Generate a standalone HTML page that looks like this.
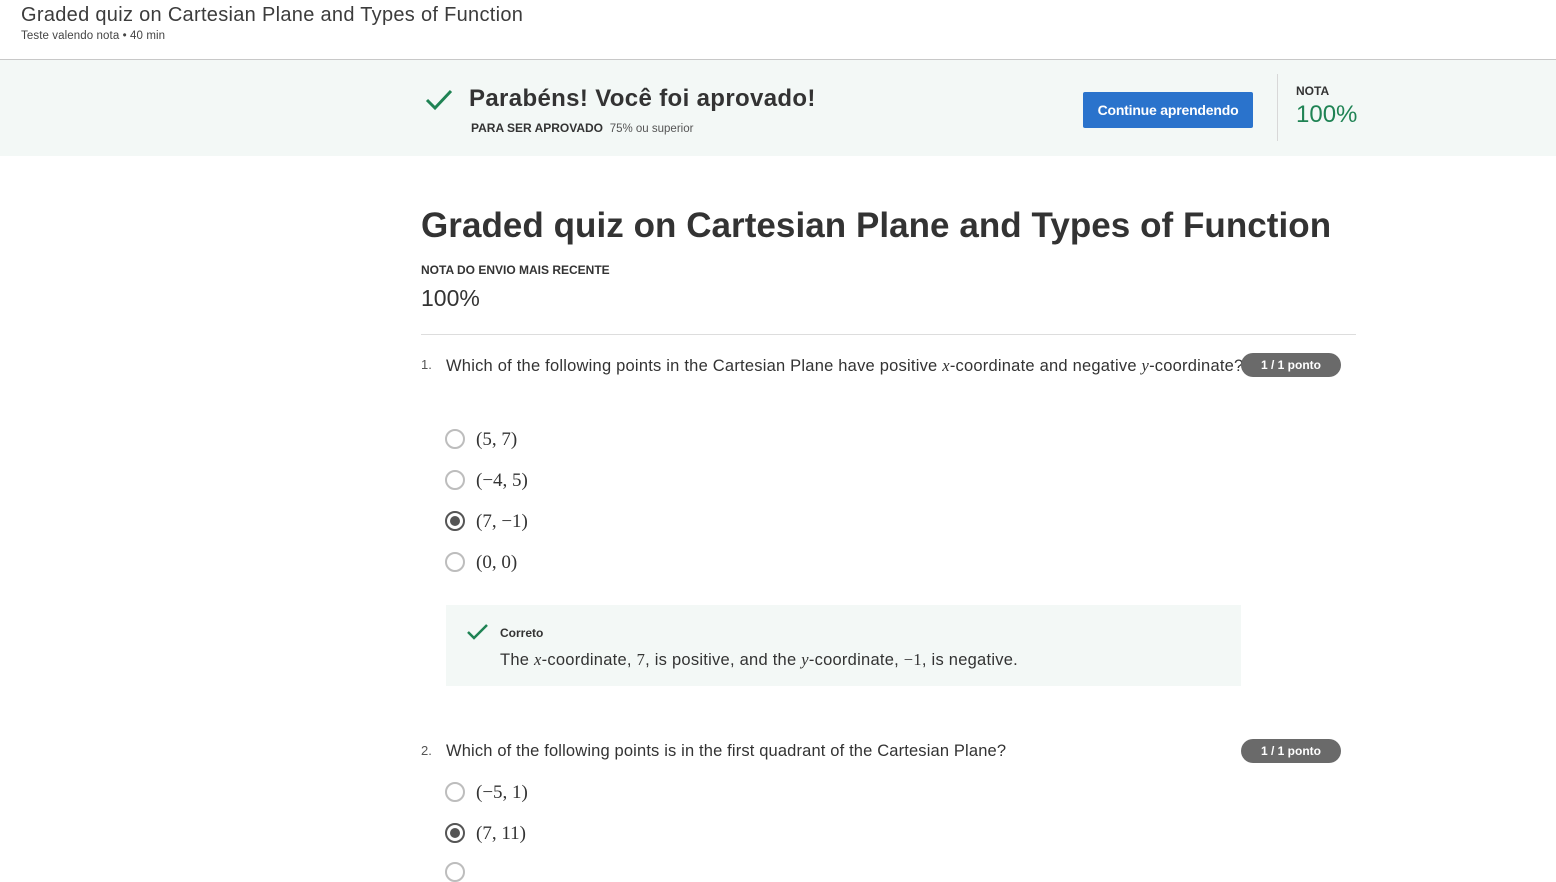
<!DOCTYPE html>
<html><head><meta charset="utf-8"><style>
*{margin:0;padding:0;box-sizing:border-box}
body{width:1556px;height:866px;overflow:hidden;background:#fff;font-family:"Liberation Sans",sans-serif;color:#1f1f1f;position:relative}
.a{position:absolute;white-space:nowrap}
.m{font-family:"Liberation Serif",serif}
.mi{font-family:"Liberation Serif",serif;font-style:italic}
.radio{position:absolute;width:20px;height:20px;border:2px solid #bdbdbd;border-radius:50%;left:445px}
.radio.on{border-color:#555}
.radio.on::after{content:"";position:absolute;left:3px;top:3px;width:10px;height:10px;border-radius:50%;background:#555}
.opt{position:absolute;left:476px;font-family:"Liberation Serif",serif;font-size:19px;color:#333}
.pill{position:absolute;z-index:2;left:1241px;width:100px;height:24px;border-radius:12px;background:#6a6a6a;color:#fff;font-size:12px;font-weight:bold;text-align:center;line-height:24px}
</style></head><body>
<div class="a" style="left:21px;top:4px;font-size:20px;color:#3c3c3c;letter-spacing:0.3px">Graded quiz on Cartesian Plane and Types of Function</div>
<div class="a" style="left:21px;top:30px;font-size:11.5px;color:#444;letter-spacing:0.1px">Teste valendo nota • 40 min</div>
<div class="a" style="left:0;top:59px;width:1556px;height:97px;background:#f3f8f6;border-top:1px solid #c8c8c8"></div>
<svg class="a" style="left:424px;top:88px" width="30" height="24" viewBox="0 0 30 24"><path d="M3 12 L11 20 L27 3" fill="none" stroke="#1f8354" stroke-width="3"/></svg>
<div class="a" style="left:469px;top:85px;font-size:24px;font-weight:bold;color:#333;letter-spacing:0.35px">Parabéns! Você foi aprovado!</div>
<div class="a" style="left:471px;top:121px;font-size:12px;color:#333"><b>PARA SER APROVADO</b>&nbsp; <span style="font-size:11.5px;color:#555">75% ou superior</span></div>
<div class="a" style="left:1083px;top:92px;width:170px;height:36px;background:#2a73cc;border-radius:2px;color:#fff;font-size:14px;font-weight:bold;text-align:center;line-height:36px;letter-spacing:-0.2px">Continue aprendendo</div>
<div class="a" style="left:1277px;top:74px;width:1px;height:67px;background:#d8d8d8"></div>
<div class="a" style="left:1296px;top:84px;font-size:12px;font-weight:bold;color:#333">NOTA</div>
<div class="a" style="left:1296px;top:101px;font-size:24px;color:#1f8354">100%</div>
<div class="a" style="left:421px;top:206px;font-size:35px;font-weight:bold;color:#333;letter-spacing:0.05px">Graded quiz on Cartesian Plane and Types of Function</div>
<div class="a" style="left:421px;top:263px;font-size:12px;font-weight:bold;color:#333">NOTA DO ENVIO MAIS RECENTE</div>
<div class="a" style="left:421px;top:285px;font-size:23px;color:#333">100%</div>
<div class="a" style="left:421px;top:334px;width:935px;height:1px;background:#ddd"></div>
<div class="a" style="left:421px;top:357px;font-size:13px;color:#555">1.</div>
<div class="a" style="left:446px;top:356px;font-size:16.5px;color:#333;letter-spacing:0.22px">Which of the following points in the Cartesian Plane have positive <span class="mi">x</span>-coordinate and negative <span class="mi">y</span>-coordinate?</div>
<div class="pill" style="top:353px">1 / 1 ponto</div>
<div class="radio" style="top:429px"></div><div class="opt" style="top:429px">(5, 7)</div>
<div class="radio" style="top:470px"></div><div class="opt" style="top:470px">(−4, 5)</div>
<div class="radio on" style="top:511px"></div><div class="opt" style="top:511px">(7, −1)</div>
<div class="radio" style="top:552px"></div><div class="opt" style="top:552px">(0, 0)</div>
<div class="a" style="left:446px;top:605px;width:795px;height:81px;background:#f3f8f6"></div>
<svg class="a" style="left:466px;top:623px" width="24" height="18" viewBox="0 0 24 18"><path d="M2 9 L8 15 L21 2" fill="none" stroke="#1f8354" stroke-width="2.5"/></svg>
<div class="a" style="left:500px;top:626px;font-size:12px;font-weight:bold;color:#333">Correto</div>
<div class="a" style="left:500px;top:650px;font-size:16.5px;color:#333;letter-spacing:0.25px">The <span class="mi">x</span>-coordinate, <span class="m">7</span>, is positive, and the <span class="mi">y</span>-coordinate, <span class="m">−1</span>, is negative.</div>
<div class="a" style="left:421px;top:743px;font-size:13px;color:#555">2.</div>
<div class="a" style="left:446px;top:742px;font-size:16.5px;color:#333;letter-spacing:0.15px">Which of the following points is in the first quadrant of the Cartesian Plane?</div>
<div class="pill" style="top:739px">1 / 1 ponto</div>
<div class="radio" style="top:782px"></div><div class="opt" style="top:782px">(−5, 1)</div>
<div class="radio on" style="top:823px"></div><div class="opt" style="top:823px">(7, 11)</div>
<div class="radio" style="top:862px"></div>
</body></html>
